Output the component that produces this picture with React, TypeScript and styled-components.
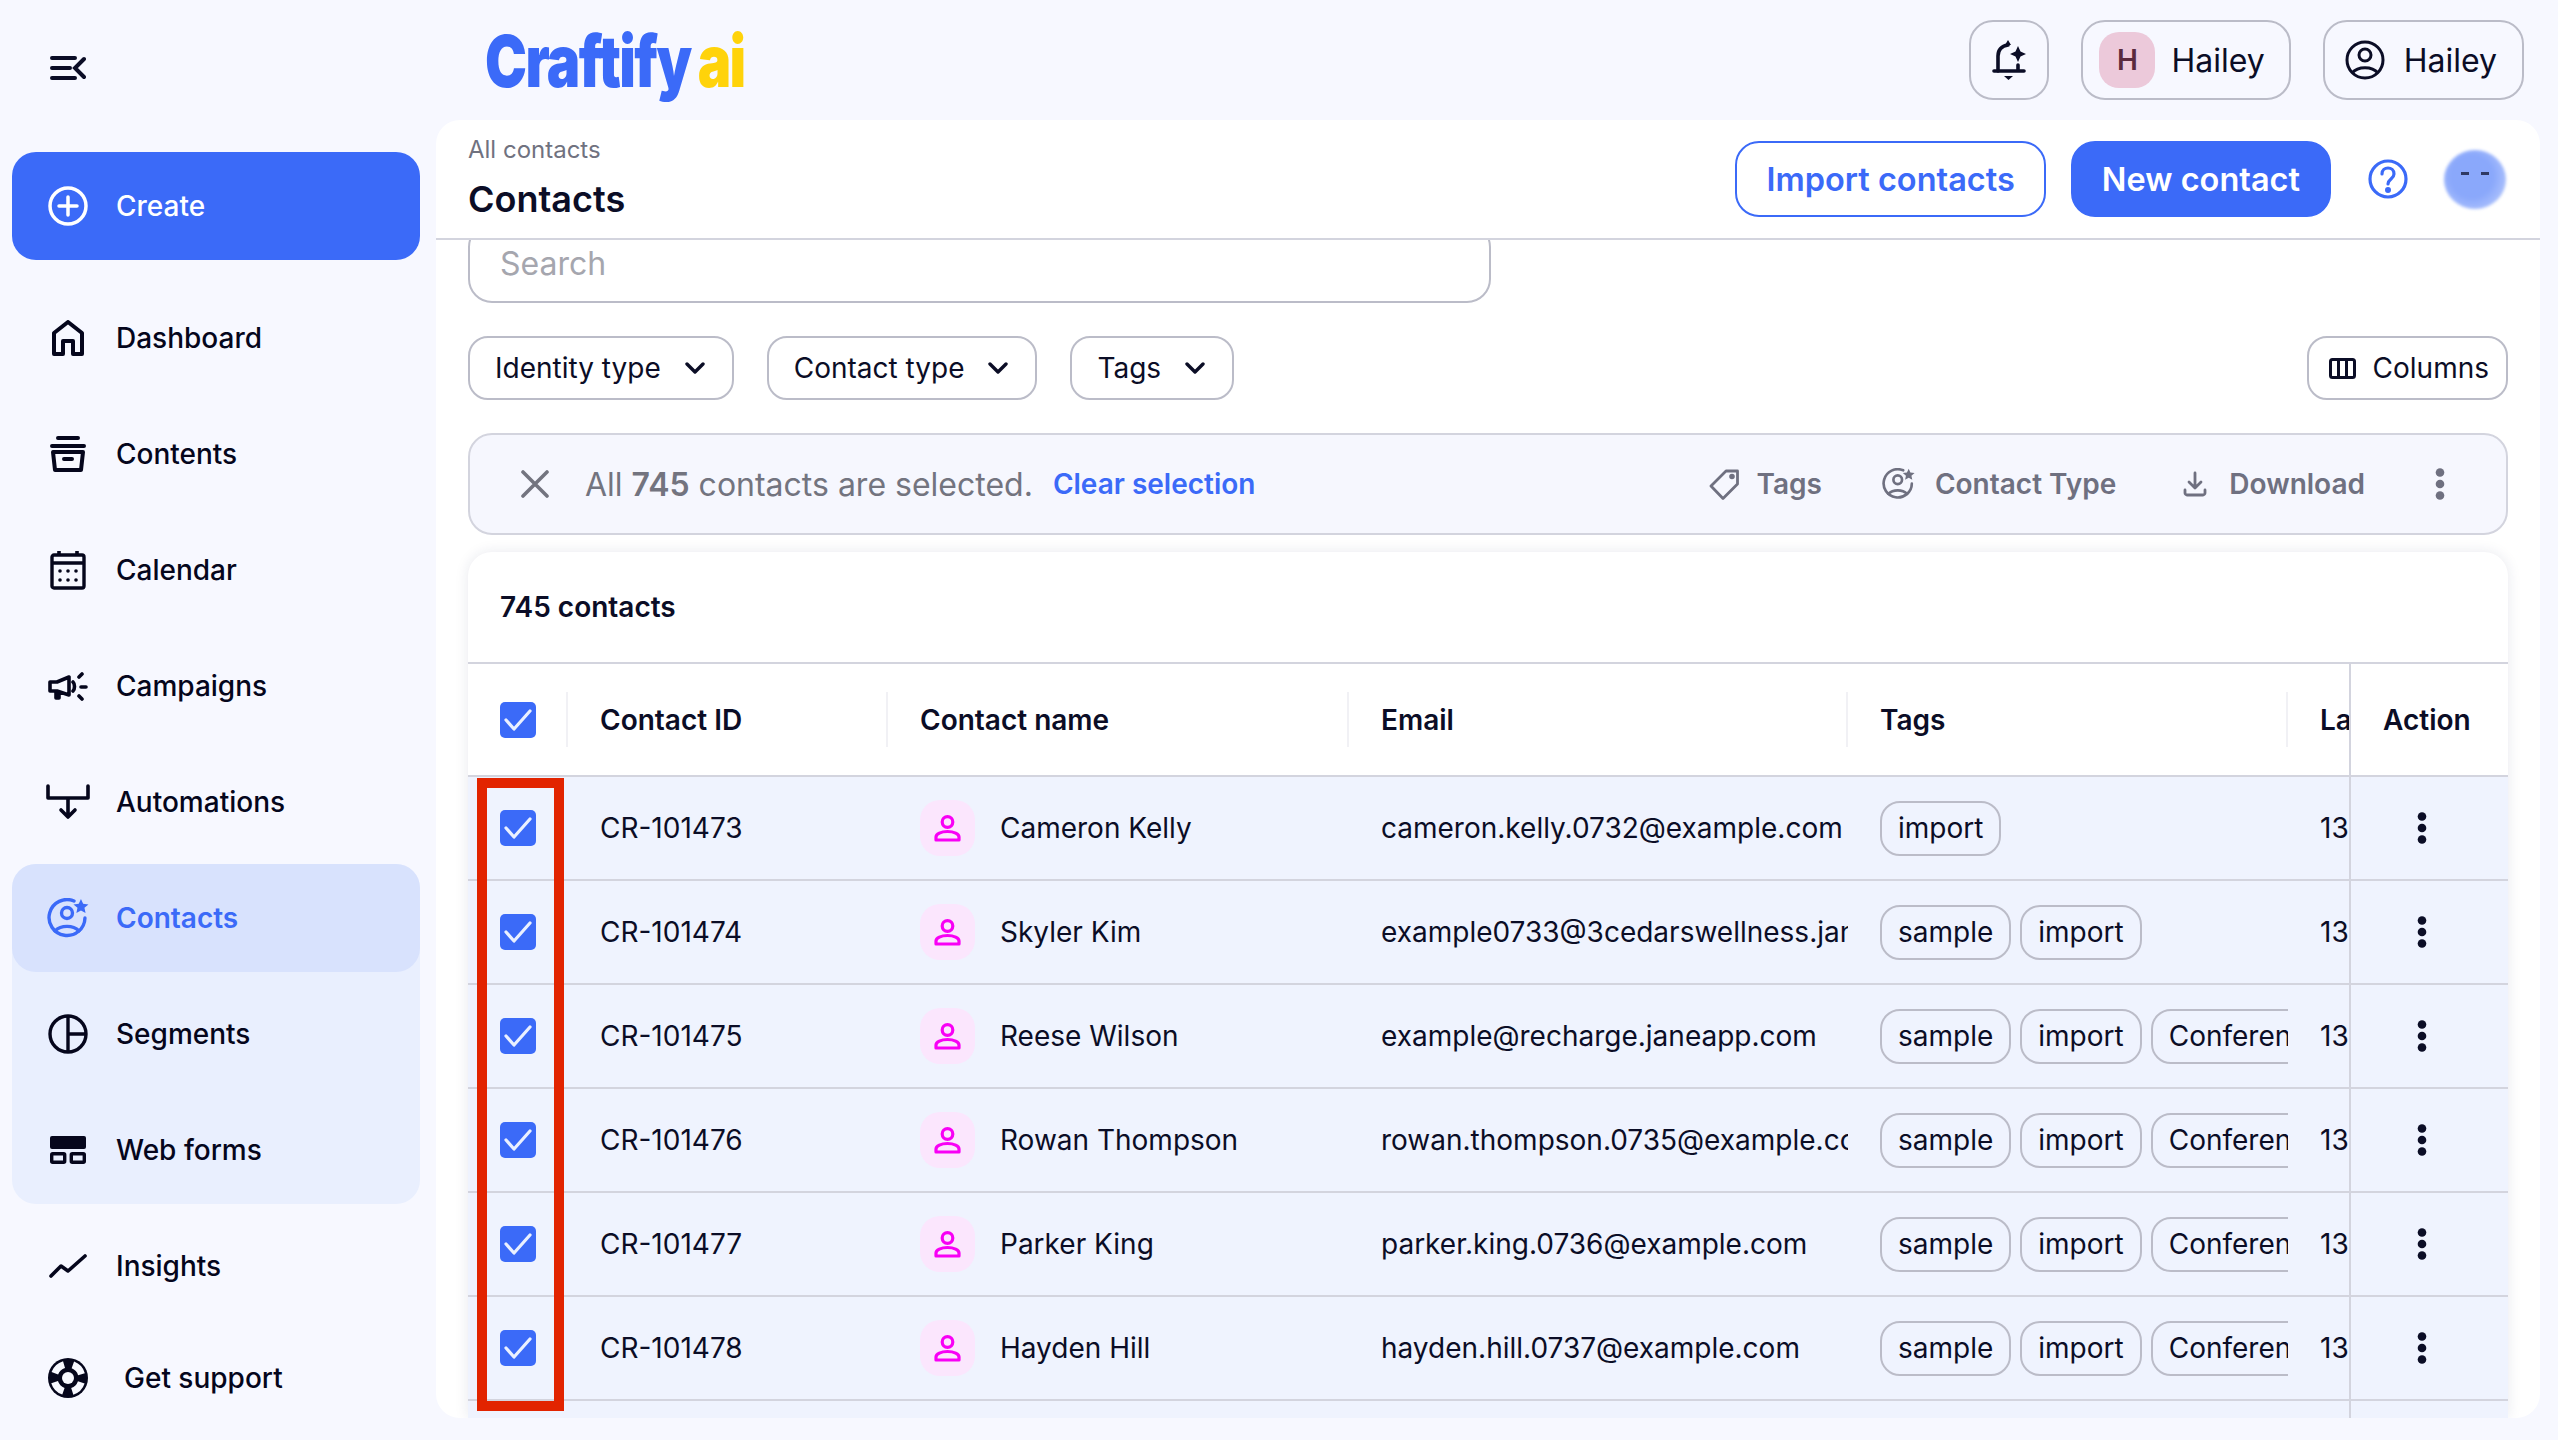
import React from 'react'
import styled, { createGlobalStyle } from 'styled-components'

const BLUE = '#3b6af8'
const INK = '#0b0d26'
const LINE = '#d3d4de'
const EDGE = '#bbbcc8'
const PAGE = '#f7f8ff'

const GRID = '100px 320px 461px 499px 440px 61px 159px'

const GlobalStyle = createGlobalStyle`
    html, body {
        margin: 0;
        padding: 0;
        background: ${PAGE};
    }
    * {
        box-sizing: border-box;
    }
    body {
        font-family: Inter, "Noto Sans", "Liberation Sans", sans-serif;
        color: ${INK};
    }
`

const Page = styled.div`
    display: grid;
    grid-template-columns: 436px 1fr;
    width: 2558px;
    height: 1440px;
    overflow: hidden;
    background: ${PAGE};
`

const Sidebar = styled.aside`
    display: flex;
    flex-direction: column;
    padding: 56px 16px 0 12px;
`

const MenuToggle = styled.div`
    display: flex;
    height: 24px;
    margin: 0 0 72px 38px;
    color: ${INK};
`

const NavList = styled.nav`
    display: flex;
    flex-direction: column;
    gap: 8px;
`

const NavItem = styled.div<{ $variant?: 'create' | 'active' }>`
    display: flex;
    align-items: center;
    height: 108px;
    padding-left: 32px;
    border-radius: 24px;
    font-size: 28px;
    font-weight: ${(props) => (props.$variant === 'active' ? 600 : 450)};
    background: ${(props) =>
        props.$variant === 'create' ? BLUE : props.$variant === 'active' ? '#d8e2fd' : 'transparent'};
    color: ${(props) =>
        props.$variant === 'create' ? '#fff' : props.$variant === 'active' ? BLUE : '#05061c'};
    margin-bottom: ${(props) => (props.$variant === 'create' ? 16 : 0)}px;
`

const NavSupport = styled(NavItem)`
    margin-top: -4px;
    span:last-child {
        margin-left: 8px;
    }
`

const NavGroup = styled.div`
    display: flex;
    flex-direction: column;
    gap: 8px;
    background: #e9effe;
    border-radius: 24px;
`

const NavIcon = styled.span`
    display: flex;
    justify-content: center;
    align-items: center;
    width: 48px;
    margin-right: 24px;
    flex-shrink: 0;
`

const Main = styled.div`
    display: flex;
    flex-direction: column;
    min-width: 0;
    padding-right: 18px;
`

const TopBar = styled.header`
    display: flex;
    align-items: center;
    height: 120px;
    flex-shrink: 0;
    padding: 0 16px 0 49px;
`

const Logo = styled.div`
    display: flex;
    align-items: baseline;
    height: 72px;
    margin-top: 12px;
    font-family: Inter, sans-serif;
    font-weight: 900;
    font-size: 72px;
    line-height: 62px;
    letter-spacing: -2px;
    color: ${BLUE};
    transform: scaleX(0.78);
    transform-origin: left center;
`

const LogoAi = styled.span`
    margin-left: 9px;
    color: #ffd30a;
`

const TopActions = styled.div`
    display: flex;
    align-items: center;
    gap: 32px;
    margin-left: auto;
`

const TopButton = styled.div`
    display: flex;
    align-items: center;
    height: 80px;
    padding: 0 25px 0 20px;
    border: 2px solid ${EDGE};
    border-radius: 24px;
    font-size: 32px;
    gap: 19px;
`

const WorkspaceButton = styled(TopButton)`
    gap: 16px;
    padding: 0 24px 0 16px;
`

const BellButton = styled(TopButton)`
    justify-content: center;
    width: 80px;
    padding: 0;
`

const Initial = styled.span`
    display: flex;
    align-items: center;
    justify-content: center;
    width: 56px;
    height: 56px;
    border-radius: 20px;
    background: #ecc9da;
    color: #5a2a3e;
    font-size: 28px;
    font-weight: 600;
`

const Panel = styled.main`
    display: flex;
    flex-direction: column;
    height: 1298px;
    background: #fff;
    border-radius: 24px;
    overflow: hidden;
`

const PanelHeader = styled.div`
    display: flex;
    align-items: center;
    height: 120px;
    flex-shrink: 0;
    padding: 0 34px 0 32px;
    border-bottom: 2px solid ${LINE};
`

const Titles = styled.div`
    display: flex;
    flex-direction: column;
    gap: 10px;
`

const Crumb = styled.div`
    font-size: 24px;
    line-height: 30px;
    color: #70727f;
`

const Title = styled.h1`
    margin: 0;
    font-size: 36px;
    line-height: 48px;
    font-weight: 600;
`

const HeaderActions = styled.div`
    display: flex;
    align-items: center;
    margin-left: auto;
`

const PrimaryButton = styled.button<{ $outline?: boolean }>`
    height: 76px;
    padding: 0 29px;
    border-radius: 24px;
    border: 2px solid ${BLUE};
    background: ${(props) => (props.$outline ? '#fff' : BLUE)};
    color: ${(props) => (props.$outline ? BLUE : '#fff')};
    font-family: inherit;
    font-size: 32.5px;
    font-weight: 600;
    margin-right: 25px;
`

const HelpSlot = styled.span`
    display: flex;
    margin: 0 36px 0 12px;
    color: ${BLUE};
`

const Blob = styled.div`
    position: relative;
    display: flex;
    justify-content: center;
    gap: 12px;
    width: 62px;
    height: 59px;
    padding-top: 22px;
    &::before {
        content: '';
        position: absolute;
        inset: 0;
        border-radius: 50%;
        background: radial-gradient(circle at 45% 45%, #8aa8fb 45%, #a5bcfc 70%, #e6e8d8 100%);
        filter: blur(1.5px);
    }
`

const BlobEye = styled.span`
    position: relative;
    width: 8px;
    height: 3px;
    background: #2f3a63;
`

const Content = styled.div`
    display: flex;
    flex-direction: column;
    flex: 1;
    min-height: 0;
    overflow: hidden;
    padding: 0 32px;
`

const SearchBox = styled.div`
    display: flex;
    align-items: center;
    flex-shrink: 0;
    width: 1023px;
    height: 80px;
    margin-top: -17px;
    padding-left: 30px;
    border: 2px solid ${EDGE};
    border-radius: 24px;
    font-size: 32px;
    color: #a5a6ae;
`

const FilterRow = styled.div`
    display: flex;
    gap: 33px;
    flex-shrink: 0;
    height: 64px;
    margin-top: 33px;
`

const FilterButton = styled.div`
    display: flex;
    align-items: center;
    gap: 24px;
    padding: 0 27px 0 25px;
    border: 2px solid ${EDGE};
    border-radius: 20px;
    font-size: 28px;
`

const ColumnsButton = styled(FilterButton)`
    gap: 17px;
    margin-left: auto;
    padding: 0 17px 0 20px;
`

const SelectionBar = styled.div`
    display: flex;
    align-items: center;
    flex-shrink: 0;
    height: 102px;
    margin-top: 33px;
    padding: 0 61px 0 51px;
    background: #f6f7fe;
    border: 2px solid ${LINE};
    border-radius: 24px;
    font-size: 32px;
    color: #73747f;
`

const CloseSlot = styled.span`
    display: flex;
    margin-right: 36px;
    color: #73747f;
`

const SelectionText = styled.span`
    b {
        font-weight: 600;
    }
`

const ClearLink = styled.span`
    margin-left: 20px;
    font-size: 28px;
    font-weight: 600;
    color: ${BLUE};
`

const BulkActions = styled.div`
    display: flex;
    align-items: center;
    margin-left: auto;
    font-size: 28px;
    font-weight: 600;
    color: #6f7080;
`

const BulkAction = styled.span<{ $gap: number; $after: number }>`
    display: flex;
    align-items: center;
    gap: ${(props) => props.$gap}px;
    margin-right: ${(props) => props.$after}px;
`

const TableCard = styled.section`
    position: relative;
    flex: 1;
    min-height: 0;
    margin-top: 17px;
    overflow: hidden;
    background: #fff;
    border-radius: 24px 24px 0 0;
    box-shadow: 0 0 14px rgba(30, 35, 90, 0.1);
`

const CardTitle = styled.div`
    display: flex;
    align-items: center;
    height: 112px;
    padding: 0 0 0 32px;
    border-bottom: 2px solid ${LINE};
    font-size: 28px;
    font-weight: 600;
`

const Row = styled.div<{ $head?: boolean }>`
    display: grid;
    grid-template-columns: ${GRID};
    height: ${(props) => (props.$head ? 113 : 104)}px;
    background: ${(props) => (props.$head ? '#fff' : '#eff3fe')};
    border-bottom: 2px solid ${LINE};
    font-size: 28px;
    font-weight: ${(props) => (props.$head ? 600 : 400)};
`

const Cell = styled.div<{ $divider?: boolean }>`
    position: relative;
    display: flex;
    align-items: center;
    min-width: 0;
    overflow: hidden;
    white-space: nowrap;
    padding-left: 32px;
    &::after {
        content: '';
        display: ${(props) => (props.$divider ? 'block' : 'none')};
        position: absolute;
        right: 0;
        top: 28px;
        bottom: 28px;
        width: 2px;
        background: #f1f1f5;
    }
`

const NameCell = styled(Cell)`
    gap: 25px;
`

const ActionCell = styled(Cell)`
    border-left: 2px solid ${LINE};
`

const DotsCell = styled(ActionCell)`
    padding-left: 66px;
`

const CheckBox = styled.span`
    display: flex;
    align-items: center;
    justify-content: center;
    width: 36px;
    height: 36px;
    border-radius: 5px;
    background: ${BLUE};
`

const PersonBadge = styled.span`
    display: flex;
    align-items: center;
    justify-content: center;
    flex-shrink: 0;
    width: 55px;
    height: 56px;
    border-radius: 20px;
    background: #fbe6fd;
    color: #f800f5;
`

const Chip = styled.span`
    display: flex;
    align-items: center;
    flex-shrink: 0;
    height: 55px;
    padding: 0 16px;
    border: 2px solid ${EDGE};
    border-radius: 20px;
`

const ChipRow = styled(Cell)`
    gap: 9px;
`

const Highlight = styled.div`
    position: absolute;
    left: 9px;
    top: 226px;
    width: 87px;
    height: 633px;
    border: 10px solid #e22400;
`

const MenuIcon = () => (
    <svg width="36" height="24" viewBox="0 0 36 24" fill="none" stroke="currentColor" strokeWidth="4" strokeLinecap="round">
        <path d="M2 2h23M2 12h18M2 22h23M34 3l-9 9 9 9" />
    </svg>
)

const PlusIcon = () => (
    <svg width="40" height="40" viewBox="0 0 40 40" fill="none" stroke="currentColor" strokeWidth="3.5" strokeLinecap="round">
        <circle cx="20" cy="20" r="18" />
        <path d="M20 11v18M11 20h18" />
    </svg>
)

const HomeIcon = () => (
    <svg width="34" height="36" viewBox="0 0 34 36" fill="none" stroke="currentColor" strokeWidth="4" strokeLinejoin="round">
        <path d="M3 34V13L17 2l14 11v21H22V21H12v13z" />
    </svg>
)

const ContentsIcon = () => (
    <svg width="36" height="36" viewBox="0 0 36 36" fill="none" stroke="currentColor" strokeWidth="4" strokeLinecap="round" strokeLinejoin="round">
        <path d="M8 2h20M2 10h32M3 16h30l-2 18H5zM14 23h8" />
    </svg>
)

const CalendarIcon = () => (
    <svg width="36" height="40" viewBox="0 0 36 40" fill="none" stroke="currentColor" strokeWidth="3.4">
        <rect x="2" y="5" width="32" height="33" rx="2" />
        <path d="M2 13h32M9 1v5M27 1v5" strokeWidth="3.6" />
        <g fill="currentColor" stroke="none">
            <circle cx="10" cy="21" r="1.8" /><circle cx="18" cy="21" r="1.8" /><circle cx="26" cy="21" r="1.8" />
            <circle cx="10" cy="30" r="1.8" /><circle cx="18" cy="30" r="1.8" /><circle cx="26" cy="30" r="1.8" />
        </g>
    </svg>
)

const CampaignIcon = () => (
    <svg width="40" height="30" viewBox="0 0 40 30" fill="none" stroke="currentColor" strokeWidth="3.6" strokeLinecap="round" strokeLinejoin="round">
        <path d="M2 11h7l12-5v18l-12-4H2zM8 20v7h3v-6" />
        <path d="M25 11c2 2 2 7 0 9M31 6l3-3M33 16h5M31 25l3 3" />
    </svg>
)

const AutomationIcon = () => (
    <svg width="44" height="36" viewBox="0 0 44 36" fill="none" stroke="currentColor" strokeWidth="3.6" strokeLinecap="round" strokeLinejoin="round">
        <path d="M2 2v12h40V2M22 14v18M15 26l7 7 7-7" />
    </svg>
)

const ContactIcon = ({ size = 42 }: { size?: number }) => (
    <svg width={size} height={size * 0.95} viewBox="0 0 42 40" fill="none" stroke="currentColor" strokeWidth="3.4" strokeLinecap="round">
        <path d="M27 3A18 18 0 1 0 38 20" />
        <circle cx="20" cy="15" r="5.5" />
        <path d="M8 33c6-6 18-6 24 0" />
        <path d="M34 1l2.2 4.8 5.3.6-4 3.5 1.1 5.2-4.6-2.6-4.6 2.6 1.1-5.2-4-3.5 5.3-.6z" fill="currentColor" stroke="none" />
    </svg>
)

const SegmentIcon = () => (
    <svg width="40" height="40" viewBox="0 0 40 40" fill="none" stroke="currentColor" strokeWidth="3.4">
        <circle cx="20" cy="20" r="18" />
        <path d="M20 2v36M20 20h18" />
    </svg>
)

const WebFormIcon = () => (
    <svg width="36" height="28" viewBox="0 0 36 28" fill="none" stroke="currentColor" strokeWidth="3.4">
        <rect x="0" y="0" width="36" height="13" rx="2" fill="currentColor" stroke="none" />
        <rect x="1.7" y="17.7" width="13" height="8.6" rx="1" />
        <rect x="21.3" y="17.7" width="13" height="8.6" rx="1" />
    </svg>
)

const InsightIcon = () => (
    <svg width="38" height="24" viewBox="0 0 38 24" fill="none" stroke="currentColor" strokeWidth="3.6" strokeLinecap="round" strokeLinejoin="round">
        <path d="M2 22l10-10 7 5L36 2" />
    </svg>
)

const SupportIcon = () => (
    <svg width="40" height="40" viewBox="0 0 40 40">
        <circle cx="20" cy="20" r="20" fill="currentColor" />
        <circle cx="20" cy="20" r="6" fill={PAGE} />
        <circle cx="20" cy="20" r="14" fill="none" stroke={PAGE} strokeWidth="7" strokeDasharray="13 9" strokeDashoffset="-4.5" />
    </svg>
)

const BellIcon = () => (
    <svg width="34" height="40" viewBox="0 0 34 40" fill="none" stroke="currentColor" strokeWidth="3.6" strokeLinecap="round">
        <path d="M6 31V16c0-7 4-10 10-11" />
        <path d="M2 31h30M26 25v6" />
        <path d="M13 5l3-5 3 5zM12 36h9l-4.500 4zM26 6l2.500 5.500 5.500 2.500-5.500 2.500-2.500 5.500-2.500-5.500-5.500-2.500 5.500-2.500z" fill="currentColor" stroke="none" />
    </svg>
)

const UserCircleIcon = () => (
    <svg width="40" height="40" viewBox="0 0 40 40" fill="none" stroke="currentColor" strokeWidth="3">
        <circle cx="20" cy="20" r="18" />
        <circle cx="20" cy="15" r="6" />
        <path d="M7 33c6-7 20-7 26 0" />
    </svg>
)

const HelpIcon = () => (
    <svg width="40" height="40" viewBox="0 0 40 40" fill="none" stroke="currentColor" strokeWidth="3.2" strokeLinecap="round">
        <circle cx="20" cy="20" r="18" />
        <path d="M14 15c0-8 12-8 12 0 0 5-6 5-6 10" />
        <circle cx="20" cy="31" r="1.400" fill="currentColor" />
    </svg>
)

const ChevronIcon = () => (
    <svg width="20" height="12" viewBox="0 0 20 12" fill="none" stroke="currentColor" strokeWidth="3.4" strokeLinecap="round" strokeLinejoin="round">
        <path d="M2 2l8 8 8-8" />
    </svg>
)

const ColumnsIcon = () => (
    <svg width="27" height="21" viewBox="0 0 27 21" fill="none" stroke="currentColor" strokeWidth="3">
        <rect x="1.500" y="1.500" width="24" height="18" rx="2" />
        <path d="M9.500 2v17M17.500 2v17" />
    </svg>
)

const CloseIcon = () => (
    <svg width="28" height="28" viewBox="0 0 28 28" fill="none" stroke="currentColor" strokeWidth="3.6" strokeLinecap="round">
        <path d="M2 2l24 24M26 2L2 26" />
    </svg>
)

const TagIcon = () => (
    <svg width="31" height="31" viewBox="0 0 31 31" fill="none" stroke="currentColor" strokeWidth="2.8" strokeLinejoin="round">
        <path d="M2 17L17 2h11.500v13L14 29.500z" />
        <circle cx="23" cy="7.500" r="1.400" fill="currentColor" />
    </svg>
)

const DownloadIcon = () => (
    <svg width="24" height="26" viewBox="0 0 24 26" fill="none" stroke="currentColor" strokeWidth="2.8" strokeLinecap="round" strokeLinejoin="round">
        <path d="M12 2v15M6 11l6 6 6-6M2 19v3c0 1 1 2 2 2h16c1 0 2-1 2-2v-3" />
    </svg>
)

const DotsIcon = ({ color }: { color: string }) => (
    <svg width="10" height="32" viewBox="0 0 10 32" fill={color}>
        <circle cx="5" cy="4.500" r="4.300" />
        <circle cx="5" cy="16" r="4.300" />
        <circle cx="5" cy="27.500" r="4.300" />
    </svg>
)

const CheckIcon = () => (
    <svg width="28" height="22" viewBox="0 0 28 22" fill="none" stroke="#eaf0ff" strokeWidth="3.200" strokeLinecap="round" strokeLinejoin="round">
        <path d="M2 11l8 9L26 2" />
    </svg>
)

const PersonIcon = () => (
    <svg width="27" height="27" viewBox="0 0 27 27" fill="none" stroke="currentColor" strokeWidth="3.2" strokeLinejoin="round">
        <circle cx="13.500" cy="7" r="5.300" />
        <path d="M2 25v-3c0-3 5-5.500 11.500-5.500S25 19 25 22v3z" />
    </svg>
)

const contacts = [
    { id: 'CR-101473', name: 'Cameron Kelly', email: 'cameron.kelly.0732@example.com', tags: ['import'] },
    { id: 'CR-101474', name: 'Skyler Kim', email: 'example0733@3cedarswellness.janeapp.com', tags: ['sample', 'import'] },
    { id: 'CR-101475', name: 'Reese Wilson', email: 'example@recharge.janeapp.com', tags: ['sample', 'import', 'Conference'] },
    { id: 'CR-101476', name: 'Rowan Thompson', email: 'rowan.thompson.0735@example.com', tags: ['sample', 'import', 'Conference'] },
    { id: 'CR-101477', name: 'Parker King', email: 'parker.king.0736@example.com', tags: ['sample', 'import', 'Conference'] },
    { id: 'CR-101478', name: 'Hayden Hill', email: 'hayden.hill.0737@example.com', tags: ['sample', 'import', 'Conference'] }
]

const App = () => {
    return (
        <>
            <GlobalStyle />
            <Page>
                <Sidebar>
                    <MenuToggle>
                        <MenuIcon />
                    </MenuToggle>
                    <NavList>
                        <NavItem $variant="create">
                            <NavIcon><PlusIcon /></NavIcon>
                            <span>Create</span>
                        </NavItem>
                        <NavItem>
                            <NavIcon><HomeIcon /></NavIcon>
                            <span>Dashboard</span>
                        </NavItem>
                        <NavItem>
                            <NavIcon><ContentsIcon /></NavIcon>
                            <span>Contents</span>
                        </NavItem>
                        <NavItem>
                            <NavIcon><CalendarIcon /></NavIcon>
                            <span>Calendar</span>
                        </NavItem>
                        <NavItem>
                            <NavIcon><CampaignIcon /></NavIcon>
                            <span>Campaigns</span>
                        </NavItem>
                        <NavItem>
                            <NavIcon><AutomationIcon /></NavIcon>
                            <span>Automations</span>
                        </NavItem>
                        <NavGroup>
                            <NavItem $variant="active">
                                <NavIcon><ContactIcon /></NavIcon>
                                <span>Contacts</span>
                            </NavItem>
                            <NavItem>
                                <NavIcon><SegmentIcon /></NavIcon>
                                <span>Segments</span>
                            </NavItem>
                            <NavItem>
                                <NavIcon><WebFormIcon /></NavIcon>
                                <span>Web forms</span>
                            </NavItem>
                        </NavGroup>
                        <NavItem>
                            <NavIcon><InsightIcon /></NavIcon>
                            <span>Insights</span>
                        </NavItem>
                        <NavSupport>
                            <NavIcon><SupportIcon /></NavIcon>
                            <span>Get support</span>
                        </NavSupport>
                    </NavList>
                </Sidebar>
                <Main>
                    <TopBar>
                        <Logo>
                            <span>Craftify</span>
                            <LogoAi>ai</LogoAi>
                        </Logo>
                        <TopActions>
                            <BellButton><BellIcon /></BellButton>
                            <WorkspaceButton>
                                <Initial>H</Initial>
                                <span>Hailey</span>
                            </WorkspaceButton>
                            <TopButton>
                                <UserCircleIcon />
                                <span>Hailey</span>
                            </TopButton>
                        </TopActions>
                    </TopBar>
                    <Panel>
                        <PanelHeader>
                            <Titles>
                                <Crumb>All contacts</Crumb>
                                <Title>Contacts</Title>
                            </Titles>
                            <HeaderActions>
                                <PrimaryButton $outline>Import contacts</PrimaryButton>
                                <PrimaryButton>New contact</PrimaryButton>
                                <HelpSlot><HelpIcon /></HelpSlot>
                                <Blob>
                                    <BlobEye />
                                    <BlobEye />
                                </Blob>
                            </HeaderActions>
                        </PanelHeader>
                        <Content>
                            <SearchBox>Search</SearchBox>
                            <FilterRow>
                                <FilterButton>Identity type <ChevronIcon /></FilterButton>
                                <FilterButton>Contact type <ChevronIcon /></FilterButton>
                                <FilterButton>Tags <ChevronIcon /></FilterButton>
                                <ColumnsButton><ColumnsIcon /> Columns</ColumnsButton>
                            </FilterRow>
                            <SelectionBar>
                                <CloseSlot><CloseIcon /></CloseSlot>
                                <SelectionText>All <b>745</b> contacts are selected.</SelectionText>
                                <ClearLink>Clear selection</ClearLink>
                                <BulkActions>
                                    <BulkAction $gap={17} $after={60}><TagIcon /> Tags</BulkAction>
                                    <BulkAction $gap={20} $after={67}><ContactIcon size={33} /> Contact Type</BulkAction>
                                    <BulkAction $gap={22} $after={70}><DownloadIcon /> Download</BulkAction>
                                    <DotsIcon color="#6f7080" />
                                </BulkActions>
                            </SelectionBar>
                            <TableCard>
                                <CardTitle>745 contacts</CardTitle>
                                <Row $head>
                                    <Cell $divider><CheckBox><CheckIcon /></CheckBox></Cell>
                                    <Cell $divider>Contact ID</Cell>
                                    <Cell $divider>Contact name</Cell>
                                    <Cell $divider>Email</Cell>
                                    <Cell $divider>Tags</Cell>
                                    <Cell>Last updated</Cell>
                                    <ActionCell>Action</ActionCell>
                                </Row>
                                {contacts.map((contact) => (
                                    <Row key={contact.id}>
                                        <Cell><CheckBox><CheckIcon /></CheckBox></Cell>
                                        <Cell>{contact.id}</Cell>
                                        <NameCell>
                                            <PersonBadge><PersonIcon /></PersonBadge>
                                            {contact.name}
                                        </NameCell>
                                        <Cell>{contact.email}</Cell>
                                        <ChipRow>
                                            {contact.tags.map((tag) => (
                                                <Chip key={tag}>{tag}</Chip>
                                            ))}
                                        </ChipRow>
                                        <Cell>13</Cell>
                                        <DotsCell><DotsIcon color={INK} /></DotsCell>
                                    </Row>
                                ))}
                                <Row>
                                    <Cell /><Cell /><Cell /><Cell /><Cell /><Cell /><ActionCell />
                                </Row>
                                <Highlight />
                            </TableCard>
                        </Content>
                    </Panel>
                </Main>
            </Page>
        </>
    )
}

export default App
